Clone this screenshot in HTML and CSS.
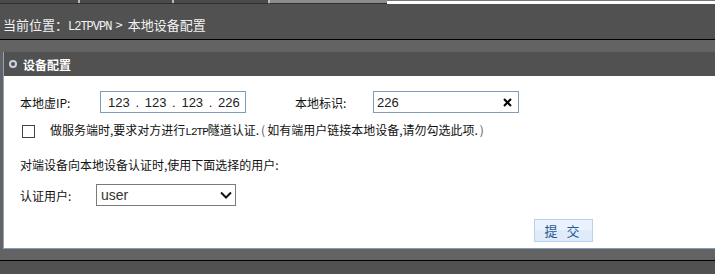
FILE: index.html
```html
<!DOCTYPE html>
<html lang="zh-CN">
<head>
    <meta charset="UTF-8">
    <title>本地设备配置</title>
    <link rel="stylesheet" href="styles.css">
</head>
<body>
    <div class="topstrip">
        <div class="seg seg-dark"><span class="tick t1"></span><span class="tick t2"></span></div>
        <span class="tick"></span>
        <div class="seg seg-mid"></div>
        <div class="seg seg-light"></div>
    </div>

    <div class="crumb">当前位置：<span class="crumb-en">L2TPVPN</span><span class="arrow">&gt;</span>本地设备配置</div>

    <div class="content">
        <div class="panel">
            <div class="panel-head">
                <span class="ring"></span>
                <span>设备配置</span>
            </div>
            <div class="panel-body">
                <div class="row row-ip">
                    <label class="lbl">本地虚IP:</label>
                    <div class="box ip-box">
                        <span>123</span><i>.</i><span>123</span><i>.</i><span>123</span><i>.</i><span>226</span>
                    </div>
                    <label class="lbl lbl-id">本地标识:</label>
                    <div class="box id-box">
                        <span>226</span>
                        <svg class="clear" width="9" height="9" viewBox="0 0 9 9">
                            <path d="M1 1 L8 8 M8 1 L1 8" stroke="#000" stroke-width="2"/>
                        </svg>
                    </div>
                </div>

                <div class="row row-check">
                    <span class="check"></span>
                    <span class="check-text">做服务端时,要求对方进行<span class="en">L2TP</span>隧道认证.<span class="paren">(</span>如有端用户链接本地设备,请勿勾选此项.<span class="paren">)</span></span>
                </div>

                <div class="row row-note">对端设备向本地设备认证时,使用下面选择的用户:</div>

                <div class="row row-user">
                    <label class="lbl lbl-user">认证用户:</label>
                    <div class="select">
                        <span>user</span>
                        <svg width="12" height="8" viewBox="0 0 12 8">
                            <polyline points="1,1.5 6,6.5 11,1.5" fill="none" stroke="#111" stroke-width="2"/>
                        </svg>
                    </div>
                </div>

                <div class="actions">
                    <button class="submit">提 交</button>
                </div>
            </div>
        </div>
    </div>
</body>
</html>
```

FILE: styles.css
```css
body {
    margin: 0;
    background-color: #515151;
    font-family: "Noto Sans CJK SC", "Liberation Sans", sans-serif;
    font-size: 12px;
    line-height: 17px;
    color: #111;
    overflow: hidden;
}
.topstrip {
    display: flex;
    height: 4px;
}
.seg {
    height: 3px;
    border-bottom: 1px solid #303030;
}
.seg-dark {
    position: relative;
    width: 268px;
    background-color: #4a4a4a;
}
.tick {
    display: block;
    width: 2px;
    height: 3px;
    background-color: #bbb;
}
.t1, .t2 {
    position: absolute;
    top: 0;
}
.t1 { left: 78px; }
.t2 { left: 172px; }
.seg-mid {
    width: 117px;
    background-color: #8c8c8c;
}
.seg-light {
    flex: 1;
    height: 1px;
    border-top: 1px solid #777;
    border-bottom: 2px solid #fff;
    background-color: #fff;
}
.crumb {
    height: 23px;
    padding: 12px 0 0 3px;
    font-size: 13px;
    color: #f2f2f2;
    border-bottom: 1px solid #000;
}
.crumb-en {
    font-family: "Liberation Mono", monospace;
    font-size: 12px;
    letter-spacing: -1px;
}
.arrow {
    margin: 0 5px 0 4px;
}
.content {
    background-color: #636363;
    padding: 12px 0 11px 3px;
    border-bottom: 1px solid #000;
}
.panel {
    border-left: 1px solid #8ea6c6;
    border-bottom: 1px solid #7f9cc6;
}
.panel-head {
    display: flex;
    align-items: center;
    gap: 6px;
    height: 24px;
    padding-left: 5px;
    background-color: #515151;
    color: #fff;
    font-weight: bold;
    font-size: 12px;
}
.ring {
    width: 4px;
    height: 4px;
    border: 2px solid #c9d2e2;
    border-radius: 50%;
}
.panel-body {
    background-color: #fff;
    height: 172px;
    padding: 15px 0 0 16px;
    box-sizing: border-box;
}
.row {
    display: flex;
    align-items: center;
}
.lbl {
    width: 80px;
}
.lbl-id {
    width: 78px;
    margin-left: 49px;
}
.box {
    display: flex;
    align-items: center;
    height: 20px;
    border: 1px solid #7f9db9;
    font-family: "Liberation Sans", sans-serif;
    font-size: 13px;
    color: #222;
}
.ip-box {
    width: 137px;
    padding-left: 7px;
}
.ip-box i {
    font-style: normal;
    width: 15px;
    text-align: center;
}
.id-box {
    width: 135px;
    padding: 0 6px 0 3px;
    justify-content: space-between;
}
.row-check {
    margin-top: 8px;
    padding-left: 2px;
}
.check {
    width: 11px;
    height: 11px;
    border: 1px solid #444;
    margin-right: 15px;
}
.en {
    font-family: "Liberation Mono", monospace;
    font-size: 11px;
    letter-spacing: -1px;
}
.paren {
    margin: 0 2px;
    color: #555;
}
.row-note {
    margin-top: 15px;
}
.row-user {
    margin-top: 11px;
}
.lbl-user {
    width: 76px;
}
.select {
    display: flex;
    align-items: center;
    justify-content: space-between;
    width: 131px;
    height: 20px;
    padding: 0 3px 0 4px;
    border: 1px solid #7a7a7a;
    font-family: "Liberation Sans", sans-serif;
    font-size: 14px;
    color: #333;
}
.actions {
    display: flex;
    justify-content: flex-end;
    padding-right: 122px;
    margin-top: 13px;
}
.submit {
    width: 59px;
    height: 23px;
    padding: 0;
    border: 1px solid #b6d2ec;
    background: linear-gradient(#eaf3fd 50%, #dfebf8 50%);
    color: #1f5a96;
    font-family: "Noto Sans CJK SC", sans-serif;
    font-size: 13px;
    line-height: 21px;
    letter-spacing: 3px;
    cursor: pointer;
}
```
